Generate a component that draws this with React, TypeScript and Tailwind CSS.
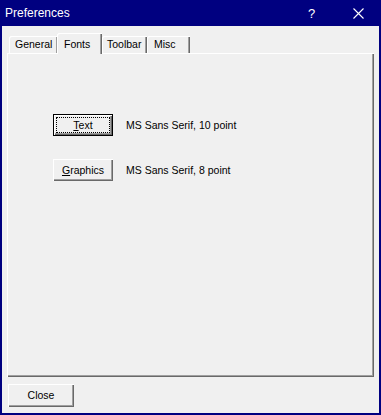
import React from "react";

const font = { fontFamily: '"Liberation Sans", Arial, sans-serif' };

export default function App() {
  return (
    <div
      className="w-[381px] h-[415px] bg-[#f0f0f0] flex flex-col border-l-2 border-r-2 border-b-2 border-[#000080] text-black"
      style={font}
    >
      {/* Title bar */}
      <div className="h-[26px] bg-[#000080] flex items-center text-white shrink-0">
        <span className="pl-[3px] text-[12px] leading-none">Preferences</span>
        <span className="ml-auto text-[13px] leading-none w-[10px] mr-[35px]">?</span>
        <svg width="11" height="11" viewBox="0 0 11 11" className="mr-[15px]">
          <path d="M0.5 0.5 L10.5 10.5 M10.5 0.5 L0.5 10.5" stroke="#fff" strokeWidth="1.1" />
        </svg>
      </div>

      {/* Content */}
      <div className="flex-1 flex flex-col px-[5px] pt-[7px] pb-[6px]">
        {/* Tabs */}
        <div className="flex items-end pl-[2px] h-[20px] relative z-10">
          <div className="w-[48px] h-[17px] flex items-center pl-[6px] text-[10.5px] rounded-tl-[2px] shadow-[inset_1px_1px_0_#fff,inset_-1px_0_0_#a0a0a0]">
            General
          </div>
          <div className="w-[45px] h-[21px] -mb-[1px] bg-[#f0f0f0] flex items-start pt-[4px] pl-[7px] text-[10.5px] rounded-tl-[2px] shadow-[inset_1px_1px_0_#fff,inset_-1px_0_0_#696969,inset_-2px_0_0_#a0a0a0]">
            Fonts
          </div>
          <div className="w-[45px] h-[17px] flex items-center pl-[5px] text-[10.5px] rounded-tl-[2px] shadow-[inset_1px_1px_0_#fff,inset_-1px_0_0_#696969,inset_-2px_0_0_#a0a0a0]">
            Toolbar
          </div>
          <div className="w-[43px] h-[17px] flex items-center pl-[7px] text-[10.5px] rounded-tl-[2px] shadow-[inset_1px_1px_0_#fff,inset_-1px_0_0_#696969,inset_-2px_0_0_#a0a0a0]">
            Misc
          </div>
        </div>

        {/* Panel */}
        <div className="h-[324px] shrink-0 shadow-[inset_1px_1px_0_#fff,inset_-1px_-1px_0_#696969,inset_-2px_-2px_0_#a0a0a0] pl-[46px] pt-[61px] flex flex-col gap-[23px]">
          <div className="flex items-center gap-[13px]">
            <div className="w-[60px] h-[22px] border border-black flex">
              <div className="flex-1 p-[2px] shadow-[inset_1px_1px_0_#fff,inset_-1px_-1px_0_#696969,inset_-2px_-2px_0_#a0a0a0] flex">
                <div className="flex-1 border border-dotted border-black flex items-center justify-center text-[10.5px] leading-none">
                  <span>
                    <span className="underline underline-offset-[1px]">T</span>ext
                  </span>
                </div>
              </div>
            </div>
            <span className="text-[10.5px] leading-none">MS Sans Serif, 10 point</span>
          </div>
          <div className="flex items-center gap-[13px]">
            <div className="w-[60px] h-[22px] flex items-center justify-center text-[10.5px] leading-none shadow-[inset_1px_1px_0_#fff,inset_-1px_-1px_0_#696969,inset_-2px_-2px_0_#a0a0a0]">
              <span>
                <span className="underline underline-offset-[1px]">G</span>raphics
              </span>
            </div>
            <span className="text-[10.5px] leading-none">MS Sans Serif, 8 point</span>
          </div>
        </div>

        {/* Footer */}
        <div className="mt-[7px] pl-[1px]">
          <div className="w-[66px] h-[23px] flex items-center justify-center text-[10.5px] leading-none shadow-[inset_1px_1px_0_#fff,inset_-1px_-1px_0_#696969,inset_-2px_-2px_0_#a0a0a0]">
            Close
          </div>
        </div>
      </div>
    </div>
  );
}
